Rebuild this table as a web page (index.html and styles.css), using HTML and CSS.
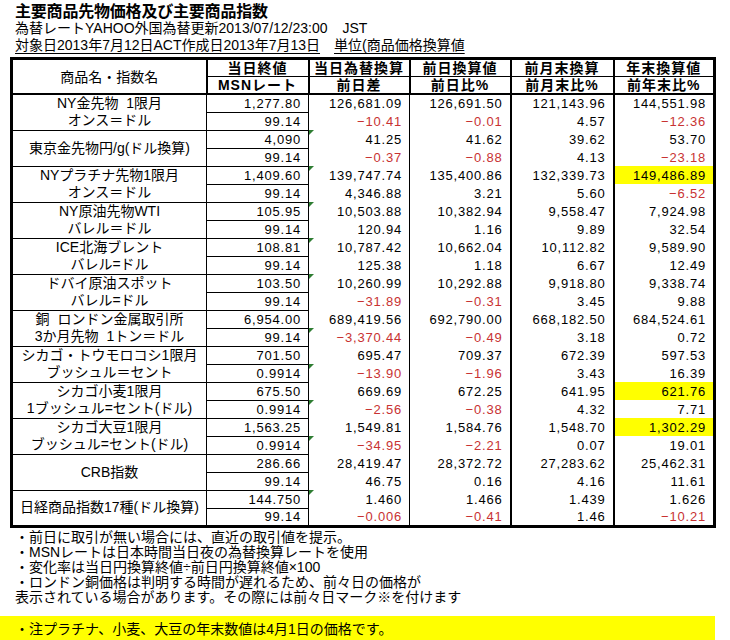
FILE: index.html
```html
<!DOCTYPE html>
<html lang="ja">
<head>
<meta charset="utf-8">
<title>主要商品先物価格及び主要商品指数</title>
<link rel="stylesheet" href="styles.css">
</head>
<body>
<div class="page">
  <div class="title">主要商品先物価格及び主要商品指数</div>
  <div class="sub">為替レートYAHOO外国為替更新2013/07/12/23:00<span class="gap"></span>JST</div>
  <div class="sub sub3"><span class="ul">対象日2013年7月12日ACT作成日2013年7月13日<span class="gap2"></span>単位(商品価格換算値</span></div>
  <table class="grid">
    <colgroup>
      <col class="w1"><col class="w2"><col class="w3"><col class="w4"><col class="w5"><col class="w6">
    </colgroup>
    <thead>
      <tr class="h1">
        <th rowspan="2" class="name-h">商品名・指数名</th>
        <th>当日終値</th><th>当日為替換算</th><th>前日換算値</th><th>前月末換算</th><th>年末換算値</th>
      </tr>
      <tr class="h2">
        <th>MSNレート</th><th>前日差</th><th>前日比%</th><th>前月末比%</th><th>前年末比%</th>
      </tr>
    </thead>
    <tbody>
      <tr><td class="name" rowspan="2">NY金先物&nbsp; 1限月<br>オンス＝ドル</td><td class="rate">1,277.80</td><td class="c3">126,681.09</td><td class="c4">126,691.50</td><td class="c5">121,143.96</td><td class="c6">144,551.98</td></tr>
      <tr><td class="rate">99.14</td><td class="c3 neg">−10.41</td><td class="c4 neg">−0.01</td><td class="c5">4.57</td><td class="c6 neg">−12.36</td></tr>

      <tr><td class="name" rowspan="2">東京金先物円/g(ドル換算)</td><td class="rate">4,090</td><td class="c3 tri">41.25</td><td class="c4">41.62</td><td class="c5">39.62</td><td class="c6">53.70</td></tr>
      <tr><td class="rate">99.14</td><td class="c3 neg">−0.37</td><td class="c4 neg">−0.88</td><td class="c5">4.13</td><td class="c6 neg">−23.18</td></tr>

      <tr><td class="name" rowspan="2">NYプラチナ先物1限月<br>オンス＝ドル</td><td class="rate">1,409.60</td><td class="c3 tri">139,747.74</td><td class="c4">135,400.86</td><td class="c5">132,339.73</td><td class="c6 hl">149,486.89</td></tr>
      <tr><td class="rate">99.14</td><td class="c3">4,346.88</td><td class="c4">3.21</td><td class="c5">5.60</td><td class="c6 neg">−6.52</td></tr>

      <tr><td class="name" rowspan="2">NY原油先物WTI<br>バレル＝ドル</td><td class="rate">105.95</td><td class="c3 tri">10,503.88</td><td class="c4">10,382.94</td><td class="c5">9,558.47</td><td class="c6">7,924.98</td></tr>
      <tr><td class="rate">99.14</td><td class="c3">120.94</td><td class="c4">1.16</td><td class="c5">9.89</td><td class="c6">32.54</td></tr>

      <tr><td class="name" rowspan="2">ICE北海ブレント<br>バレル=ドル</td><td class="rate">108.81</td><td class="c3 tri">10,787.42</td><td class="c4">10,662.04</td><td class="c5">10,112.82</td><td class="c6">9,589.90</td></tr>
      <tr><td class="rate">99.14</td><td class="c3">125.38</td><td class="c4">1.18</td><td class="c5">6.67</td><td class="c6">12.49</td></tr>

      <tr><td class="name" rowspan="2">ドバイ原油スポット<br>バレル=ドル</td><td class="rate">103.50</td><td class="c3 tri">10,260.99</td><td class="c4">10,292.88</td><td class="c5">9,918.80</td><td class="c6">9,338.74</td></tr>
      <tr><td class="rate">99.14</td><td class="c3 neg">−31.89</td><td class="c4 neg">−0.31</td><td class="c5">3.45</td><td class="c6">9.88</td></tr>

      <tr><td class="name" rowspan="2">銅&nbsp; ロンドン金属取引所<br>3か月先物&nbsp; 1トン＝ドル</td><td class="rate">6,954.00</td><td class="c3">689,419.56</td><td class="c4">692,790.00</td><td class="c5">668,182.50</td><td class="c6">684,524.61</td></tr>
      <tr><td class="rate">99.14</td><td class="c3 neg tri">−3,370.44</td><td class="c4 neg">−0.49</td><td class="c5">3.18</td><td class="c6">0.72</td></tr>

      <tr><td class="name" rowspan="2">シカゴ・トウモロコシ1限月<br>ブッシュル＝セント</td><td class="rate">701.50</td><td class="c3">695.47</td><td class="c4">709.37</td><td class="c5">672.39</td><td class="c6">597.53</td></tr>
      <tr><td class="rate">0.9914</td><td class="c3 neg tri">−13.90</td><td class="c4 neg">−1.96</td><td class="c5">3.43</td><td class="c6">16.39</td></tr>

      <tr><td class="name" rowspan="2">シカゴ小麦1限月<br>1ブッシュル=セント(ドル)</td><td class="rate">675.50</td><td class="c3">669.69</td><td class="c4">672.25</td><td class="c5">641.95</td><td class="c6 hl">621.76</td></tr>
      <tr><td class="rate">0.9914</td><td class="c3 neg tri">−2.56</td><td class="c4 neg">−0.38</td><td class="c5">4.32</td><td class="c6">7.71</td></tr>

      <tr><td class="name" rowspan="2">シカゴ大豆1限月<br>ブッシュル=セント(ドル)</td><td class="rate">1,563.25</td><td class="c3">1,549.81</td><td class="c4">1,584.76</td><td class="c5">1,548.70</td><td class="c6 hl">1,302.29</td></tr>
      <tr><td class="rate">0.9914</td><td class="c3 neg tri">−34.95</td><td class="c4 neg">−2.21</td><td class="c5">0.07</td><td class="c6">19.01</td></tr>

      <tr><td class="name" rowspan="2">CRB指数</td><td class="rate">286.66</td><td class="c3">28,419.47</td><td class="c4">28,372.72</td><td class="c5">27,283.62</td><td class="c6">25,462.31</td></tr>
      <tr><td class="rate">99.14</td><td class="c3">46.75</td><td class="c4">0.16</td><td class="c5">4.16</td><td class="c6">11.61</td></tr>

      <tr><td class="name" rowspan="2">日経商品指数17種(ドル換算)</td><td class="rate">144.750</td><td class="c3 tri">1.460</td><td class="c4">1.466</td><td class="c5">1.439</td><td class="c6">1.626</td></tr>
      <tr><td class="rate">99.14</td><td class="c3 neg">−0.006</td><td class="c4 neg">−0.41</td><td class="c5">1.46</td><td class="c6 neg">−10.21</td></tr>
    </tbody>
  </table>
  <div class="notes">
    <div>・前日に取引が無い場合には、直近の取引値を提示。</div>
    <div>・MSNレートは日本時間当日夜の為替換算レートを使用</div>
    <div>・変化率は当日円換算終値÷前日円換算終値×100</div>
    <div>・ロンドン銅価格は判明する時間が遅れるため、前々日の価格が</div>
    <div>表示されている場合があります。その際には前々日マーク※を付けます</div>
  </div>
  <div class="note-hl">・注プラチナ、小麦、大豆の年末数値は4月1日の価格です。</div>
</div>
</body>
</html>
```

FILE: styles.css
```css
html, body {
  margin: 0;
  padding: 0;
  background: #ffffff;
}
body {
  font-family: "Liberation Sans", "Noto Sans CJK JP", sans-serif;
  color: #000;
}
.page {
  padding-left: 10px;
  width: 720px;
}
.title {
  padding-left: 5px;
  margin-top: 4px;
  font-size: 16px;
  font-weight: bold;
  line-height: 16px;
  letter-spacing: -0.2px;
}
.sub {
  padding-left: 5px;
  font-size: 14px;
  line-height: 16px;
  white-space: nowrap;
}
.sub3 {
  line-height: 19px;
}
.ul {
  text-decoration: underline;
  text-underline-offset: 3px;
}
.gap {
  display: inline-block;
  width: 15px;
}
.gap2 {
  display: inline-block;
  width: 14px;
}
.grid {
  margin-top: 2px;
  border-collapse: collapse;
  table-layout: fixed;
  width: 703px;
  border: 3px solid #000;
}
.w1 { width: 195px; }
.w2 { width: 102px; }
.w3 { width: 101px; }
.w4 { width: 101px; }
.w5 { width: 103px; }
.w6 { width: 101px; }

.grid th {
  border: 2px solid #000;
  padding: 0;
  font-size: 14px;
  font-weight: bold;
  letter-spacing: 1px;
  text-align: center;
  line-height: 16px;
  height: 16px;
}
.grid .h1 th {
  border-bottom-width: 1px;
}
.grid .h2 th {
  border-top-width: 1px;
}
.grid th.name-h {
  font-weight: normal;
  letter-spacing: 0;
  border-bottom-width: 2px;
}
.grid tbody tr {
  height: 18px;
}
.grid td {
  padding: 0 7px 0 0;
  font-size: 13px;
  line-height: 15px;
  text-align: right;
  letter-spacing: 0.8px;
  border: 0;
  white-space: nowrap;
}
.grid td.name {
  padding: 0;
  text-align: center;
  font-size: 14px;
  line-height: 17px;
  letter-spacing: 0;
  border-right: 1px solid #000;
  border-bottom: 1px solid #000;
}
.grid td.rate {
  border: 1px solid #000;
}
.grid td.c3 {
  border-right: 1px solid #000;
}
.grid td.c4 {
  border-right: 2px solid #000;
}
.grid td.c5 {
  border-right: 2px solid #000;
}
.grid td.neg {
  color: #c83232;
}
.grid td.hl {
  background: #ffff00;
}
.grid td.tri {
  position: relative;
}
.grid td.tri::before {
  content: "";
  position: absolute;
  left: 0;
  top: 0;
  border-top: 5px solid #2e7d32;
  border-right: 5px solid transparent;
}
.notes {
  padding-left: 5px;
  font-size: 14px;
  line-height: 15px;
  margin-top: 2px;
  white-space: nowrap;
}
.note-hl {
  margin-left: -10px;
  margin-top: 11px;
  width: 715px;
  box-sizing: border-box;
  padding-left: 15px;
  height: 26px;
  line-height: 26px;
  font-size: 14px;
  background: #ffff00;
  white-space: nowrap;
}
```
